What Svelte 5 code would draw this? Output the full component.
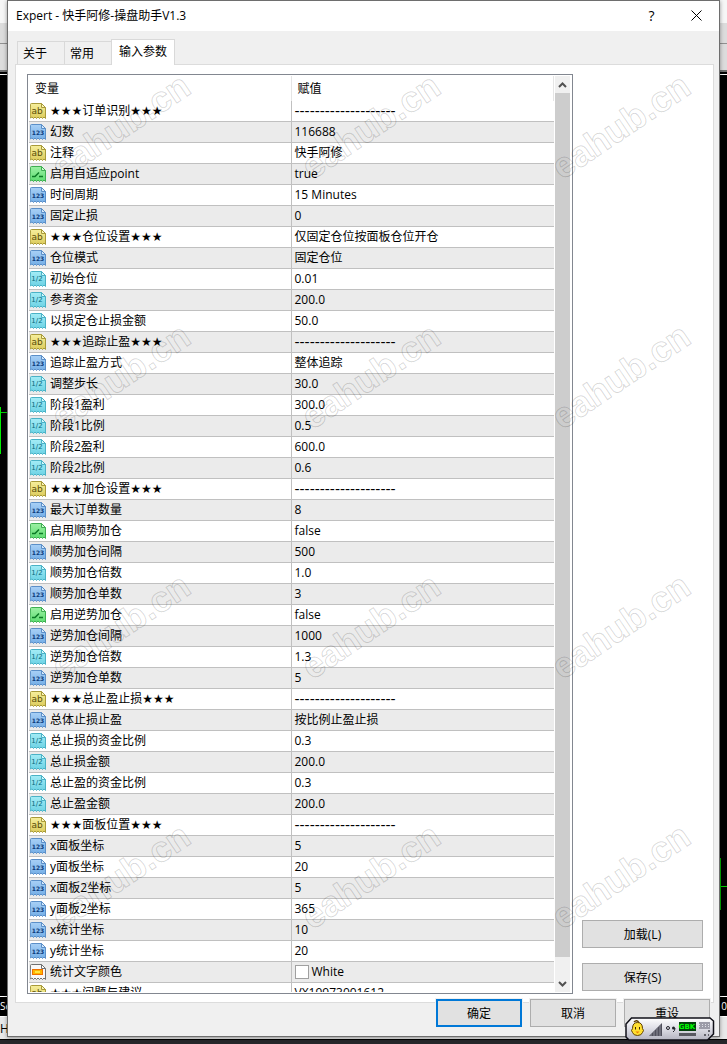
<script>
const dashes = '--------------------'

// kind: ab = string, int = integer, bool = switch, real = double, color = color
const params = [
    { kind: 'ab', name: '★★★订单识别★★★', value: dashes },
    { kind: 'int', name: '幻数', value: '116688' },
    { kind: 'ab', name: '注释', value: '快手阿修' },
    { kind: 'bool', name: '启用自适应point', value: 'true' },
    { kind: 'int', name: '时间周期', value: '15 Minutes' },
    { kind: 'int', name: '固定止损', value: '0' },
    { kind: 'ab', name: '★★★仓位设置★★★', value: '仅固定仓位按面板仓位开仓' },
    { kind: 'int', name: '仓位模式', value: '固定仓位' },
    { kind: 'real', name: '初始仓位', value: '0.01' },
    { kind: 'real', name: '参考资金', value: '200.0' },
    { kind: 'real', name: '以损定仓止损金额', value: '50.0' },
    { kind: 'ab', name: '★★★追踪止盈★★★', value: dashes },
    { kind: 'int', name: '追踪止盈方式', value: '整体追踪' },
    { kind: 'real', name: '调整步长', value: '30.0' },
    { kind: 'real', name: '阶段1盈利', value: '300.0' },
    { kind: 'real', name: '阶段1比例', value: '0.5' },
    { kind: 'real', name: '阶段2盈利', value: '600.0' },
    { kind: 'real', name: '阶段2比例', value: '0.6' },
    { kind: 'ab', name: '★★★加仓设置★★★', value: dashes },
    { kind: 'int', name: '最大订单数量', value: '8' },
    { kind: 'bool', name: '启用顺势加仓', value: 'false' },
    { kind: 'int', name: '顺势加仓间隔', value: '500' },
    { kind: 'real', name: '顺势加仓倍数', value: '1.0' },
    { kind: 'int', name: '顺势加仓单数', value: '3' },
    { kind: 'bool', name: '启用逆势加仓', value: 'false' },
    { kind: 'int', name: '逆势加仓间隔', value: '1000' },
    { kind: 'real', name: '逆势加仓倍数', value: '1.3' },
    { kind: 'int', name: '逆势加仓单数', value: '5' },
    { kind: 'ab', name: '★★★总止盈止损★★★', value: dashes },
    { kind: 'int', name: '总体止损止盈', value: '按比例止盈止损' },
    { kind: 'real', name: '总止损的资金比例', value: '0.3' },
    { kind: 'real', name: '总止损金额', value: '200.0' },
    { kind: 'real', name: '总止盈的资金比例', value: '0.3' },
    { kind: 'real', name: '总止盈金额', value: '200.0' },
    { kind: 'ab', name: '★★★面板位置★★★', value: dashes },
    { kind: 'int', name: 'x面板坐标', value: '5' },
    { kind: 'int', name: 'y面板坐标', value: '20' },
    { kind: 'int', name: 'x面板2坐标', value: '5' },
    { kind: 'int', name: 'y面板2坐标', value: '365' },
    { kind: 'int', name: 'x统计坐标', value: '10' },
    { kind: 'int', name: 'y统计坐标', value: '20' },
    { kind: 'color', name: '统计文字颜色', value: 'White' },
    { kind: 'ab', name: '★★★问题与建议', value: 'VX19973001612' },
]

const tabs = ['关于', '常用', '输入参数']
let activeTab = $state('输入参数')

const icons = {
    ab: { fill: 'url(#g-ab)', edge: '#a89a3a', fold: '#fbf6b8', ink: '#5a4e08' },
    int: { fill: 'url(#g-int)', edge: '#5b8fc8', fold: '#d4e8fb', ink: '#0c3c7c' },
    bool: { fill: 'url(#g-bool)', edge: '#3fae52', fold: '#cdfbd0', ink: '#0c7a26' },
    real: { fill: 'url(#g-real)', edge: '#4ab2c6', fold: '#d4f8fc', ink: '#08687c' },
    color: { fill: '#f8f8f8', edge: '#707070', fold: '#ffffff', ink: '#d06000' },
}

const marks = []
for (let y = 0; y < 4; y++) {
    for (let x = 0; x < 3; x++) marks.push({ x: 122 + x * 250, y: 128 + y * 250 })
}
</script>

<svg class="defs" width="0" height="0" aria-hidden="true">
    <defs>
        <linearGradient id="g-ab" x2="0" y2="1"><stop stop-color="#f6ef9c" /><stop offset="1" stop-color="#dccb5c" /></linearGradient>
        <linearGradient id="g-int" x2="0" y2="1"><stop stop-color="#a8d0f6" /><stop offset="1" stop-color="#74aee6" /></linearGradient>
        <linearGradient id="g-bool" x2="0" y2="1"><stop stop-color="#9cf0a4" /><stop offset="1" stop-color="#5cdc70" /></linearGradient>
        <linearGradient id="g-real" x2="0" y2="1"><stop stop-color="#a4ecf6" /><stop offset="1" stop-color="#6cd2e4" /></linearGradient>
        <linearGradient id="g-metal" x2="0" y2="1"><stop stop-color="#ffffff" /><stop offset=".5" stop-color="#dcdce4" /><stop offset="1" stop-color="#b4b4c0" /></linearGradient>
    </defs>
</svg>

<div class="desktop">
    <!-- terminal window behind the dialog -->
    <div class="terminal">
        <div class="caption"></div>
        <div class="toolbar"></div>
        <div class="toolbar low"></div>
        <div class="chart">
            <i class="candle left"></i>
            <i class="candle right"></i>
        </div>
        <div class="axis"><span>Se</span><span>0</span></div>
        <div class="status">H</div>
        <div class="taskbar"></div>
    </div>

    <div class="dialog">
        <header>
            <h1>Expert - 快手阿修-操盘助手V1.3</h1>
            <button class="cap" aria-label="Help">?</button>
            <button class="cap" aria-label="Close">
                <svg width="11" height="11" viewBox="0 0 11 11"><path d="M.5 .5l10 10M10.5 .5l-10 10" stroke="#000" fill="none" /></svg>
            </button>
        </header>

        <div class="tabs">
            {#each tabs as tab}
                <button class="tab" class:active={tab === activeTab} onclick={() => (activeTab = tab)}>{tab}</button>
            {/each}
        </div>

        <div class="page">
            <div class="list">
                <div class="view">
                    <table>
                        <thead>
                            <tr><th>变量</th><th>赋值</th></tr>
                        </thead>
                        <tbody>
                            {#each params as p}
                                {@const ic = icons[p.kind]}
                                <tr>
                                    <td>
                                        <div class="cell">
                                            <svg class="icon" width="16" height="16" viewBox="0 0 16 16">
                                                <path d="M.5 1.5q0-1 1-1H11.500L15.500 4.500v11l-1.500-1.500-1.500 1.500-1.500-1.500-1.500 1.500-1.500-1.500-1.500 1.500-1.500-1.500-1.500 1.500-1.500-1.500-2 1z" fill={ic.fill} stroke={ic.edge} />
                                                <path d="M11.500 .5v4h4z" fill={ic.fold} stroke={ic.edge} />
                                                {#if p.kind === 'ab'}
                                                    <text x="7" y="11" font-size="9" fill={ic.ink}>ab</text>
                                                {:else if p.kind === 'int'}
                                                    <text x="8" y="11" font-size="6" font-weight="700" fill={ic.ink}>123</text>
                                                {:else if p.kind === 'real'}
                                                    <text x="7" y="10" font-size="7" fill={ic.ink}>1/2</text>
                                                {:else if p.kind === 'bool'}
                                                    <path d="M2 10.500h3l4-4M9 10.500h4" fill="none" stroke={ic.ink} stroke-width="1.500" />
                                                {:else}
                                                    <rect x="2.500" y="5.500" width="10" height="5" fill="#ffb400" stroke="#f07000" />
                                                    <rect x="5" y="7" width="5" height="2" fill="#ffe640" />
                                                {/if}
                                            </svg>
                                            {p.name}
                                        </div>
                                    </td>
                                    <td>
                                        <div class="cell" class:dashes={p.value === dashes}>
                                            {#if p.kind === 'color'}<span class="swatch"></span>{/if}
                                            {p.value}
                                        </div>
                                    </td>
                                </tr>
                            {/each}
                        </tbody>
                    </table>
                </div>
                <div class="scroll">
                    <button aria-label="Up"><svg width="9" height="6" viewBox="0 0 9 6"><path d="M1 5l3.500-3.500L8 5" /></svg></button>
                    <div class="track"><div class="thumb"></div></div>
                    <button aria-label="Down"><svg width="9" height="6" viewBox="0 0 9 6"><path d="M1 1l3.500 3.500L8 1" /></svg></button>
                </div>
            </div>
            <div class="side">
                <button class="btn">加载(L)</button>
                <button class="btn">保存(S)</button>
            </div>
        </div>

        <footer>
            <button class="btn default">确定</button>
            <button class="btn">取消</button>
            <button class="btn">重设</button>
        </footer>
    </div>

    <svg class="watermark" aria-hidden="true">
        {#each marks as m}
            <text transform="translate({m.x} {m.y}) rotate(-34)" y="10">eahub.cn</text>
        {/each}
    </svg>

    <!-- input method bar -->
    <svg class="ime" width="90" height="24" viewBox="0 0 90 24">
        <path d="M6.500 1H85l3.500 3v13l-6 6H4L1 20V7z" fill="url(#g-metal)" stroke="#101018" stroke-width="1.500" />
        <path d="M9 5q3-3 5 1" stroke="#604000" fill="none" stroke-width="1.500" />
        <path d="M12.500 5.500q5 0 5 6 2 2 0 4-1 3-5 3t-5-3q-2-2 0-4 0-6 5-6z" fill="#ffdf30" stroke="#604000" />
        <path d="M10.500 10v2.500M14.500 10v2.500" stroke="#402800" />
        <path d="M10.500 14.500h4l-2 2z" fill="#f08000" />
        <path d="M24 19L37 6v13z" fill="#50505c" />
        <path d="M26 19v-2M29 19v-5M32 19v-8M35 19V8" stroke="#8c8c98" />
        <circle cx="43" cy="11" r="1.500" fill="none" stroke="#202028" />
        <circle cx="48.500" cy="11" r="1.500" fill="#202028" />
        <path d="M50 11q0 3-2 4" fill="none" stroke="#202028" />
        <rect x="54" y="5" width="17" height="9" fill="#04400c" />
        <text x="62" y="12" font-size="7" font-weight="700" fill="#00ff00">GBK</text>
        <rect x="54" y="16" width="17" height="3" fill="#585860" />
        <rect x="74" y="5" width="11" height="7" fill="#9c9ca8" />
        <path d="M74 7.500h11M74 9.500h11" stroke="#e0e0e8" stroke-dasharray="1 2" />
        <path d="M79 18h2M83 14h2M83 18h1" stroke="#404048" stroke-width="1.500" />
    </svg>
</div>

<style>
:global(body) {
    margin: 0;
    background: #000;
    font-family: "Open Sans", "DejaVu Sans", "Noto Sans CJK SC", sans-serif;
    font-size: 12px;
    color: #000;
}
.defs {
    position: absolute;
}
button {
    font: inherit;
    color: inherit;
    padding: 0;
    border: 0;
    background: none;
}
.desktop {
    position: relative;
    display: grid;
    height: 100vh;
    overflow: hidden;
}
.terminal,
.dialog {
    grid-area: 1 / 1;
    min-height: 0;
}
.terminal {
    display: flex;
    flex-direction: column;
}
.caption {
    height: 23px;
    background: #f6f6f6;
}
.toolbar {
    height: 20px;
    background: #dcdcdc;
    border-bottom: 1px solid #909090;
}
.toolbar.low {
    height: 26px;
    border-bottom: 2px solid #707070;
}
.chart {
    position: relative;
    flex: 1;
    border-top: 1px solid #fff;
    margin-top: 2px;
}
.candle {
    position: absolute;
    height: 47px;
    border-right: 1px solid #00f000;
}
.candle::after {
    content: "";
    position: absolute;
    border-top: 1px dashed #00d000;
}
.candle.left {
    left: 0;
    top: 36%;
}
.candle.left::after {
    top: 5px;
    left: 1px;
    width: 6px;
}
.candle.right {
    right: 6px;
    top: 85%;
    height: 52px;
    border-color: #00b400;
}
.candle.right::after {
    top: 28px;
    left: 1px;
    width: 6px;
}
.axis {
    display: flex;
    justify-content: space-between;
    height: 19px;
    line-height: 19px;
    font-size: 10px;
    color: #fff;
    border-top: 1px solid #fff;
    border-bottom: 1px solid #fff;
}
.status {
    height: 22px;
    line-height: 24px;
    background: #e8e8e8;
    border-bottom: 1px solid #000;
}
.taskbar {
    height: 4px;
    background: #26262a;
}

.dialog {
    position: relative;
    display: flex;
    flex-direction: column;
    box-sizing: border-box;
    margin: 0 7px 7px;
    border: 1px solid #6e6e6e;
    background: #f0f0f0;
    box-shadow: 0 1px 4px rgba(0, 0, 0, .4);
}
header {
    display: flex;
    align-items: center;
    height: 28px;
    padding: 0 0 2px 8px;
    background: #fff;
}
h1 {
    flex: 1;
    margin: 0;
    font-size: 12px;
    font-weight: 400;
}
.cap {
    display: flex;
    align-items: center;
    justify-content: center;
    width: 45px;
    height: 28px;
    font-size: 14px;
}
.tabs {
    display: flex;
    align-items: flex-end;
    height: 33px;
    padding-left: 9px;
}
.tab {
    width: 48px;
    height: 23px;
    margin-right: -1px;
    padding: 0 5px;
    text-align: left;
    border: 1px solid #d9d9d9;
    border-bottom: 0;
}
.tab.active {
    z-index: 1;
    width: auto;
    height: 26px;
    margin-bottom: -1px;
    padding: 0 7px 3px;
    background: #fff;
}
.page {
    display: flex;
    flex: 1;
    gap: 9px;
    min-height: 0;
    margin: 0 5px 0 7px;
    padding: 9px 10px 8px 11px;
    border: 1px solid #dcdcdc;
    background: #fff;
}
.list {
    display: flex;
    flex: 1;
    gap: 1px;
    padding: 1px 2px 1px 1px;
    border: 1px solid #828790;
}
.view {
    flex: 1;
    overflow: hidden;
}
table {
    width: 100%;
    table-layout: fixed;
    border-collapse: separate;
    border-spacing: 0;
}
th,
td {
    box-sizing: border-box;
    padding: 0;
    text-align: left;
    white-space: nowrap;
}
th {
    height: 25px;
    padding: 0 0 2px 6px;
    font-weight: 400;
    border-right: 1px solid #e5e5e5;
}
th:first-child {
    width: calc(50% - 1px);
}
td {
    height: 21px;
    border-bottom: 1px solid #c0c0c0;
}
td:first-child {
    border-right: 1px solid #c0c0c0;
}
tbody tr:nth-child(even) {
    background: #ebebeb;
}
.cell {
    display: flex;
    align-items: center;
    gap: 4px;
    height: 20px;
    padding-left: 1px;
    line-height: 20px;
}
td + td .cell {
    gap: 3px;
    padding-left: 3px;
}
.dashes {
    font-family: "DejaVu Sans", sans-serif;
    font-size: 14px;
}
.icon text {
    font-family: "DejaVu Sans", sans-serif;
    text-anchor: middle;
}
.swatch {
    box-sizing: border-box;
    width: 14px;
    height: 14px;
    border: 1px solid #a0a0a0;
    background: #fff;
}
.scroll {
    display: flex;
    flex-direction: column;
    width: 15px;
    background: #f0f0f0;
}
.scroll button {
    display: flex;
    align-items: center;
    justify-content: center;
    height: 17px;
}
.scroll path {
    fill: none;
    stroke: #505050;
    stroke-width: 2;
}
.track {
    flex: 1;
}
.thumb {
    height: 98%;
    background: #cdcdcd;
}
.side {
    display: flex;
    flex-direction: column;
    justify-content: flex-end;
    gap: 15px;
    width: 121px;
    padding-bottom: 3px;
}
.btn {
    box-sizing: border-box;
    height: 28px;
    padding-bottom: 1px;
    border: 1px solid #adadad;
    background: #e1e1e1;
}
footer {
    display: flex;
    justify-content: flex-end;
    gap: 8px;
    margin-top: -4px;
    padding: 0 9px 9px;
}
footer .btn {
    width: 86px;
    outline: 1px solid #f0f0f0;
}
footer .default {
    border: 2px solid #0078d7;
}

.watermark {
    position: absolute;
    width: 100%;
    height: 100%;
    pointer-events: none;
}
.watermark text {
    font-family: "Liberation Sans", sans-serif;
    font-size: 36px;
    font-weight: 700;
    text-anchor: middle;
    fill: none;
    stroke: rgba(0, 0, 0, .16);
}
.ime {
    position: absolute;
    right: 12px;
    bottom: 3px;
}
.ime text {
    font-family: "DejaVu Sans", sans-serif;
    text-anchor: middle;
}
</style>
